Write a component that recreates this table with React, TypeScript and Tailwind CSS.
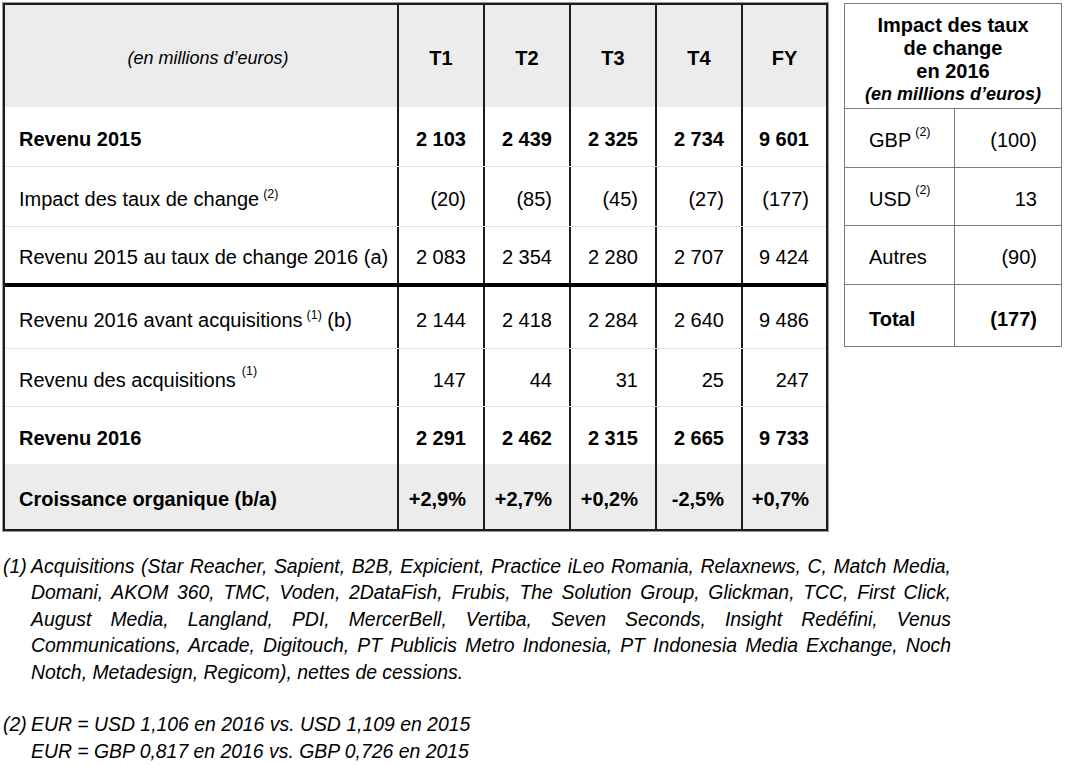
import React from 'react'

type Ligne = {
  label: React.ReactNode
  valeurs: string[]
  gras?: boolean
  h: string
  fond?: boolean
  trait?: boolean
}

const Sup = ({ children, haut }: { children: React.ReactNode; haut?: boolean }) => (
  <span className={haut ? 'relative -top-[12px] ml-[6px] text-[12.5px]' : 'relative -top-[8px] ml-[4px] text-[12.5px]'}>
    {children}
  </span>
)

const LIGNES_2015: Ligne[] = [
  { label: 'Revenu 2015', valeurs: ['2 103', '2 439', '2 325', '2 734', '9 601'], gras: true, h: 'h-[59px]' },
  {
    label: (
      <>
        Impact des taux de change<Sup>(2)</Sup>
      </>
    ),
    valeurs: ['(20)', '(85)', '(45)', '(27)', '(177)'],
    h: 'h-[60px]',
    trait: true,
  },
  {
    label: 'Revenu 2015 au taux de change 2016 (a)',
    valeurs: ['2 083', '2 354', '2 280', '2 707', '9 424'],
    h: 'h-[57px]',
    trait: true,
  },
]

const LIGNES_2016: Ligne[] = [
  {
    label: (
      <>
        Revenu 2016 avant acquisitions<Sup>(1)</Sup> (b)
      </>
    ),
    valeurs: ['2 144', '2 418', '2 284', '2 640', '9 486'],
    h: 'h-[61px]',
  },
  {
    label: (
      <>
        Revenu des acquisitions<Sup haut>(1)</Sup>
      </>
    ),
    valeurs: ['147', '44', '31', '25', '247'],
    h: 'h-[58px]',
    trait: true,
  },
  { label: 'Revenu 2016', valeurs: ['2 291', '2 462', '2 315', '2 665', '9 733'], gras: true, h: 'h-[58px]', trait: true },
  {
    label: 'Croissance organique (b/a)',
    valeurs: ['+2,9%', '+2,7%', '+0,2%', '-2,5%', '+0,7%'],
    gras: true,
    h: 'h-[65px]',
    fond: true,
  },
]

const LARGEURS = ['w-[86px]', 'w-[86px]', 'w-[86px]', 'w-[86px]', 'w-[85px]']

function LigneTableau({ ligne }: { ligne: Ligne }) {
  return (
    <div
      className={`flex ${ligne.h} ${ligne.fond ? 'bg-[#ececec]' : 'bg-white'} ${ligne.gras ? 'font-bold' : ''} ${
        ligne.trait ? 'border-t border-[#e3e3e3]' : ''
      }`}
    >
      <div className="flex w-[392px] items-center pl-[14px] pt-[4px]">
        <span>{ligne.label}</span>
      </div>
      {ligne.valeurs.map((v, i) => (
        <div key={i} className={`flex ${LARGEURS[i]} items-center justify-end border-l-2 border-[#1c1c1c] pr-[17px] pt-[4px]`}>
          {v}
        </div>
      ))}
    </div>
  )
}

function ImpactTaux() {
  const lignes = [
    { devise: <>GBP<Sup>(2)</Sup></>, valeur: '(100)' },
    { devise: <>USD<Sup>(2)</Sup></>, valeur: '13' },
    { devise: 'Autres', valeur: '(90)' },
  ]
  return (
    <div className="w-[218px] self-start border-[1.5px] border-[#7a7a7a] bg-white">
      <div className="flex h-[104px] flex-col items-center pt-[10px] text-center">
        <p className="text-[20px] font-bold leading-[23px]">Impact des taux</p>
        <p className="text-[20px] font-bold leading-[23px]">de change</p>
        <p className="text-[20px] font-bold leading-[23px]">en 2016</p>
        <p className="text-[18px] font-bold italic leading-[23px]">(en millions d’euros)</p>
      </div>
      {lignes.map((l, i) => (
        <div key={i} className={`flex ${i === 1 ? 'h-[58px]' : 'h-[59px]'} border-t-[1.5px] border-[#7a7a7a]`}>
          <div className="flex w-[109px] items-center pl-[24px] pt-[4px]">{l.devise}</div>
          <div className="flex flex-1 items-center justify-end border-l-[1.5px] border-[#7a7a7a] pr-[24px] pt-[4px]">
            {l.valeur}
          </div>
        </div>
      ))}
      <div className="flex h-[62px] border-t-[1.5px] border-[#7a7a7a] font-bold">
        <div className="flex w-[109px] items-center pl-[24px] pt-[6px]">Total</div>
        <div className="flex flex-1 items-center justify-end border-l-[1.5px] border-[#7a7a7a] pr-[24px] pt-[6px]">
          (177)
        </div>
      </div>
    </div>
  )
}

export default function App() {
  return (
    <div
      className="min-h-[765px] w-[1065px] bg-white pl-[3px] pt-[3px] text-[20px] text-black"
      style={{ fontFamily: '"Liberation Sans", Arial, Helvetica, sans-serif' }}
    >
      <div className="flex gap-[16px]">
        <div className="w-[825px] border-2 border-[#1c1c1c] outline outline-1 outline-[#9a9a9a]">
          {/* en-tête */}
          <div className="flex h-[102px] bg-[#ececec]">
            <div className="flex w-[392px] items-center justify-center pl-[14px] pt-[4px] text-[18px] italic">
              (en millions d’euros)
            </div>
            {['T1', 'T2', 'T3', 'T4', 'FY'].map((t, i) => (
              <div
                key={t}
                className={`flex ${LARGEURS[i]} items-center justify-center border-l-2 border-[#1c1c1c] pt-[4px] font-bold`}
              >
                {t}
              </div>
            ))}
          </div>
          {LIGNES_2015.map((l, i) => (
            <LigneTableau key={i} ligne={l} />
          ))}
          <div className="h-[4px] bg-black" />
          {LIGNES_2016.map((l, i) => (
            <LigneTableau key={i} ligne={l} />
          ))}
        </div>
        <ImpactTaux />
      </div>

      <div className="mt-[22px] text-[19.4px] italic leading-[26.4px]">
        <div className="flex">
          <span className="w-[28px] shrink-0">(1)</span>
          <p className="w-[920px] text-justify">
            Acquisitions (Star Reacher, Sapient, B2B, Expicient, Practice iLeo Romania, Relaxnews, C, Match Media,
            Domani, AKOM 360, TMC, Voden, 2DataFish, Frubis, The Solution Group, Glickman, TCC, First Click, August
            Media, Langland, PDI, MercerBell, Vertiba, Seven Seconds, Insight Redéfini, Venus Communications, Arcade,
            Digitouch, PT Publicis Metro Indonesia, PT Indonesia Media Exchange, Noch Notch, Metadesign, Regicom),
            nettes de cessions.
          </p>
        </div>
        <div className="mt-[26.4px] flex">
          <span className="w-[28px] shrink-0">(2)</span>
          <div>
            <p>EUR = USD 1,106 en 2016 vs. USD 1,109 en 2015</p>
            <p>EUR = GBP 0,817 en 2016 vs. GBP 0,726 en 2015</p>
          </div>
        </div>
      </div>
    </div>
  )
}
